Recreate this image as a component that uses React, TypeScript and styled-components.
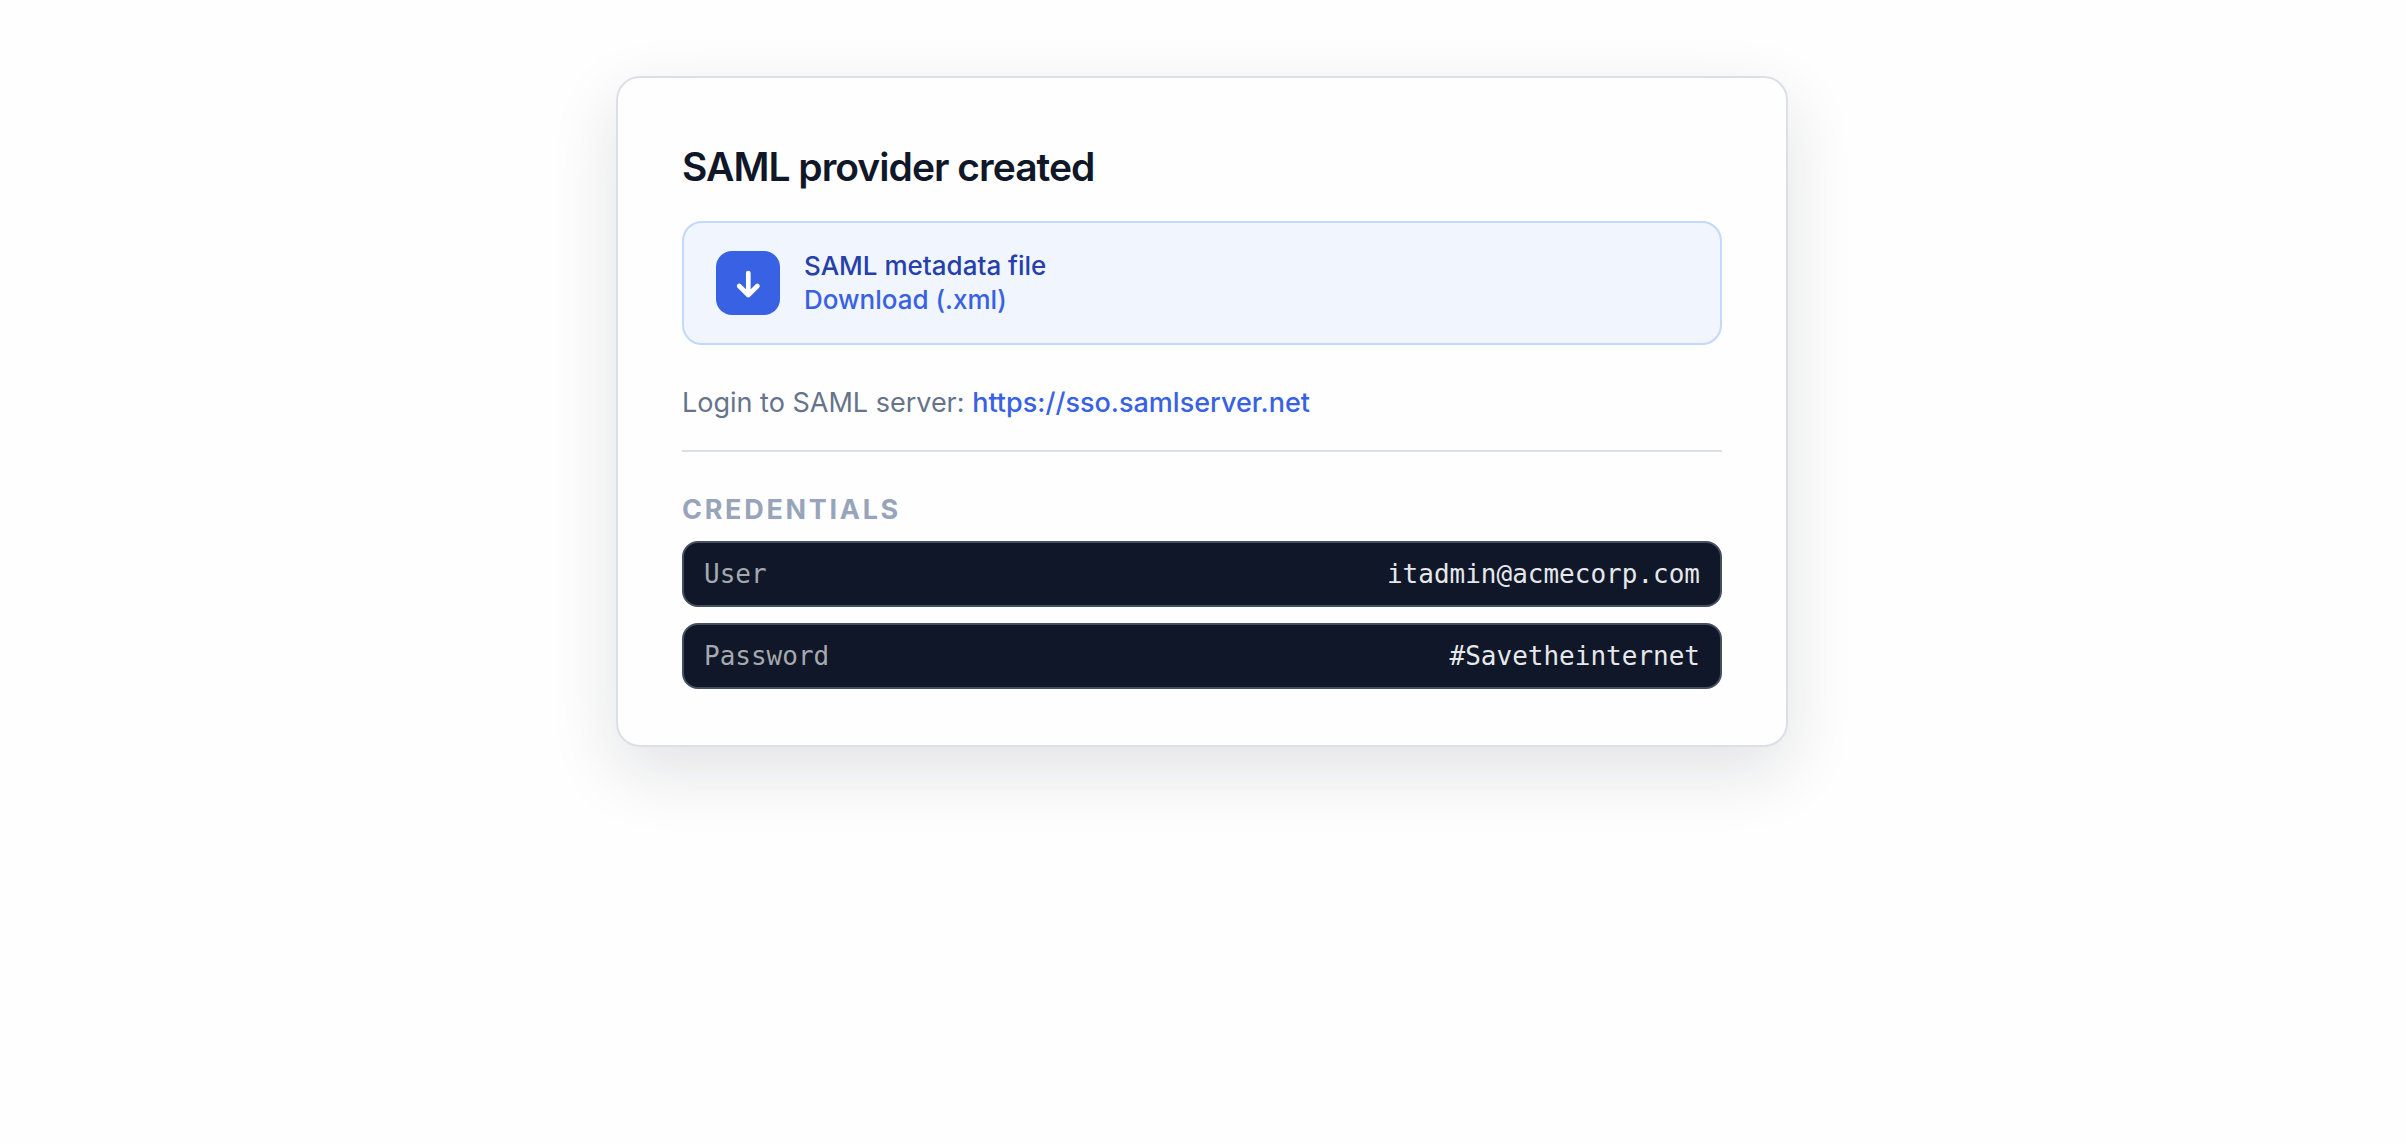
import React from "react";
import styled, { createGlobalStyle } from "styled-components";

const GlobalStyle = createGlobalStyle`
  *, *::before, *::after {
    box-sizing: border-box;
  }
  body {
    margin: 0;
    background: #fefefe;
    font-family: Inter, "Liberation Sans", sans-serif;
    -webkit-font-smoothing: antialiased;
  }
`;

const Page = styled.main`
  display: flex;
  justify-content: center;
  padding: 76px 24px 120px 22px;
`;

const Card = styled.section`
  width: 100%;
  max-width: 1172px;
  padding: 64px 64px 56px;
  background: #fefefe;
  border: 2px solid #dbe0e8;
  border-radius: 24px;
  box-shadow: 0 24px 68px rgba(15, 23, 42, 0.12);
`;

const Title = styled.h1`
  margin: 0 0 29px;
  color: #101728;
  font-size: 39px;
  font-weight: 600;
  line-height: 50px;
  letter-spacing: -0.025em;
`;

const FileBox = styled.div`
  display: flex;
  align-items: center;
  gap: 24px;
  padding: 26px 32px;
  background: #f0f5fe;
  border: 2px solid #c2d9fb;
  border-radius: 20px;
`;

const FileIcon = styled.span`
  display: flex;
  align-items: center;
  justify-content: center;
  flex: none;
  width: 64px;
  height: 64px;
  background: #3862e3;
  border-radius: 16px;
`;

const FileText = styled.div`
  display: flex;
  flex-direction: column;
  align-items: flex-start;
  font-size: 26px;
  font-weight: 500;
  line-height: 34px;
`;

const FileName = styled.span`
  color: #263fa9;
`;

const Link = styled.a`
  color: #3862e3;
  font-weight: 500;
  text-decoration: none;
`;

const LoginLine = styled.p`
  margin: 37px 0 26px;
  color: #66748b;
  font-size: 27px;
  line-height: 42px;
`;

const Divider = styled.hr`
  height: 2px;
  margin: 0;
  background: #dbe0e8;
  border: 0;
`;

const SectionTitle = styled.h2`
  margin: 37px 0 10px;
  color: #97a4b9;
  font-size: 27px;
  font-weight: 700;
  line-height: 42px;
  letter-spacing: 0.1em;
  text-transform: uppercase;
`;

const Credentials = styled.dl`
  display: flex;
  flex-direction: column;
  gap: 16px;
  margin: 0;
`;

const CredentialRow = styled.div`
  display: flex;
  align-items: center;
  justify-content: space-between;
  padding: 14px 20px;
  background: #101728;
  border: 2px solid #454f62;
  border-radius: 16px;
  font-family: "DejaVu Sans Mono", monospace;
  font-size: 26px;
  line-height: 34px;
`;

const Label = styled.dt`
  color: #a5a8af;
`;

const Value = styled.dd`
  margin: 0;
  color: #e5e7eb;
`;

const credentials = [
  { label: "User", value: "itadmin@acmecorp.com" },
  { label: "Password", value: "#Savetheinternet" },
];

function DownArrow() {
  return (
    <svg
      width="32"
      height="32"
      viewBox="0 0 32 32"
      fill="none"
      stroke="#fefefe"
      strokeWidth="4.7"
      strokeLinecap="round"
      strokeLinejoin="round"
      aria-hidden="true"
    >
      <path d="M16.3 6v22M7.2 19l9.1 9 9.1-9" />
    </svg>
  );
}

export default function App() {
  return (
    <>
      <GlobalStyle />
      <Page>
        <Card>
          <Title>SAML provider created</Title>
          <FileBox>
            <FileIcon>
              <DownArrow />
            </FileIcon>
            <FileText>
              <FileName>SAML metadata file</FileName>
              <Link href="#metadata">Download (.xml)</Link>
            </FileText>
          </FileBox>
          <LoginLine>
            Login to SAML server:{" "}
            <Link href="https://sso.samlserver.net">https://sso.samlserver.net</Link>
          </LoginLine>
          <Divider />
          <SectionTitle>Credentials</SectionTitle>
          <Credentials>
            {credentials.map(({ label, value }) => (
              <CredentialRow key={label}>
                <Label>{label}</Label>
                <Value>{value}</Value>
              </CredentialRow>
            ))}
          </Credentials>
        </Card>
      </Page>
    </>
  );
}
